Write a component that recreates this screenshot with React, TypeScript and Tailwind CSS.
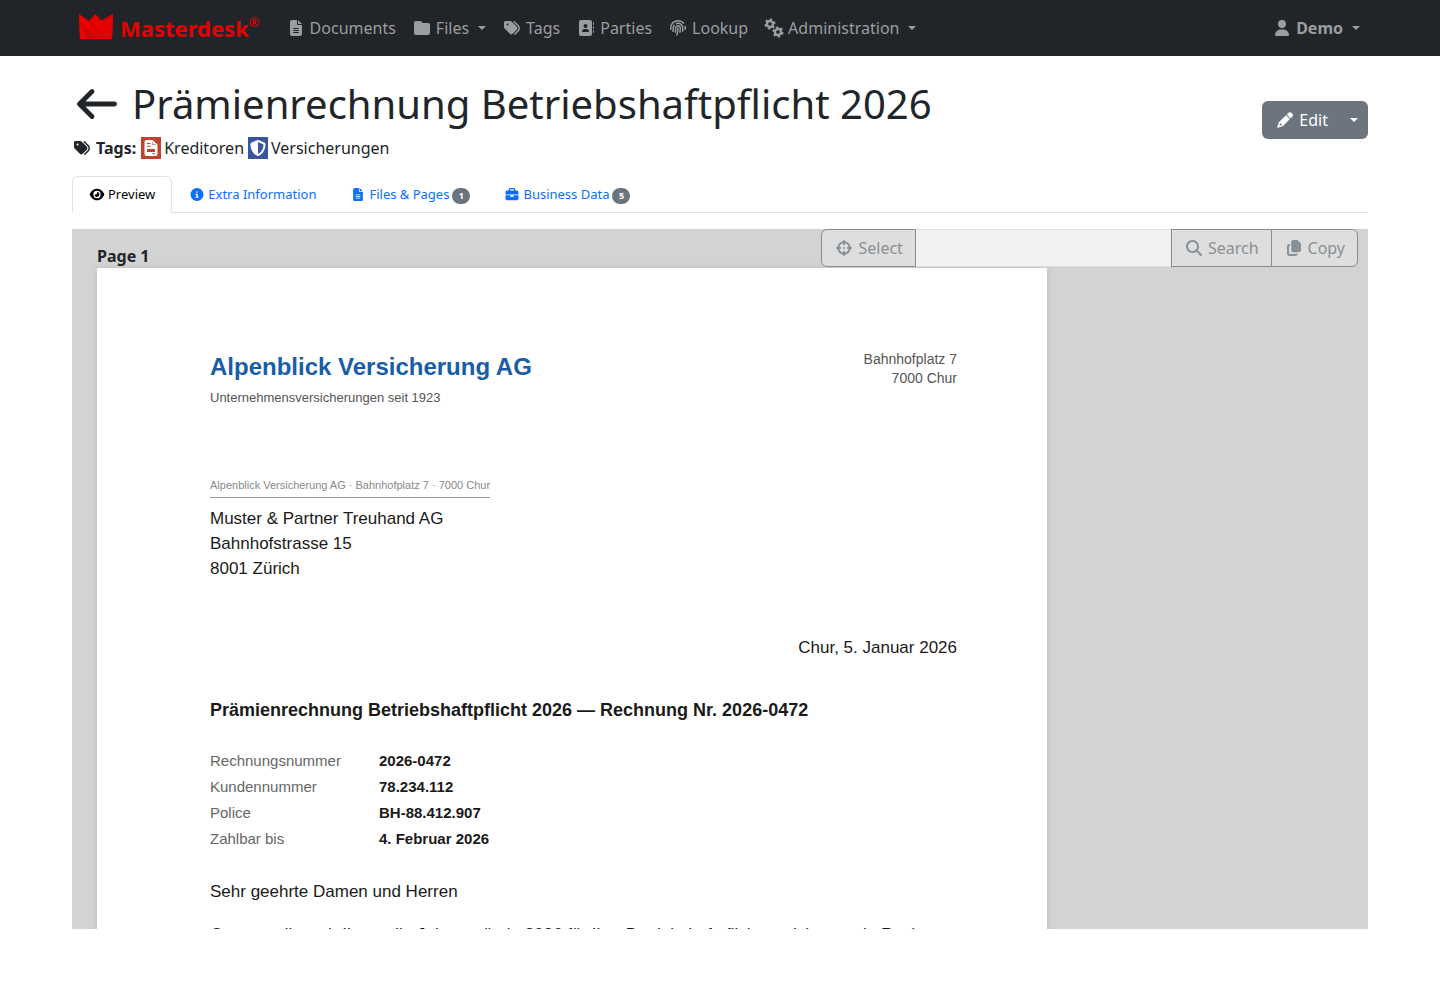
import { FC, ReactNode } from "react";
import {
  FaAddressBook,
  FaBriefcase,
  FaCircleInfo,
  FaCrosshairs,
  FaEye,
  FaFileLines,
  FaFingerprint,
  FaFolder,
  FaMagnifyingGlass,
  FaShieldHalved,
  FaTags,
  FaUser,
} from "react-icons/fa6";
import clsx from "clsx";

type Icon = FC<{ className?: string }>;

const ArrowIcon: Icon = ({ className }) => (
  <svg viewBox="0 0 512 512" className={className} aria-hidden="true">
    <path
      d="M480 256H32M192 96L32 256L192 416"
      fill="none"
      stroke="currentColor"
      strokeWidth="62"
      strokeLinecap="round"
      strokeLinejoin="round"
    />
  </svg>
);

const GEAR_TEETH = [0, 60, 120, 180, 240, 300];

const GearsIcon: Icon = ({ className }) => (
  <svg viewBox="0 0 20 20" className={className} fill="none" stroke="currentColor" aria-hidden="true">
    <g transform="translate(6 6) rotate(12)">
      <circle r="3" strokeWidth="2.400" />
      {GEAR_TEETH.map((angle) => (
        <path key={angle} d="M0 -3.500V-5.500" strokeWidth="2.600" transform={`rotate(${angle})`} />
      ))}
    </g>
    <g transform="translate(14 14) rotate(-12)">
      <circle r="3" strokeWidth="2.400" />
      {GEAR_TEETH.map((angle) => (
        <path key={angle} d="M0 -3.500V-5.500" strokeWidth="2.600" transform={`rotate(${angle})`} />
      ))}
    </g>
  </svg>
);

const PencilIcon: Icon = ({ className }) => (
  <svg viewBox="0 0 16 16" className={className} fill="currentColor" aria-hidden="true">
    <path d="M11.300 0.900a2.300 2.300 0 0 1 3.200 0l0.700 0.700a2.300 2.300 0 0 1 0 3.200l-1.600 1.600-3.900-3.900z" />
    <path
      fillRule="evenodd"
      d="M9 3.200l3.900 3.900-6.600 6.600a2 2 0 0 1-0.900 0.500L0.900 15.800a0.600 0.600 0 0 1-0.700-0.700l1.600-4.500a2 2 0 0 1 0.500-0.900zM3.200 11.400l-0.900 2.400 2.400-0.900v-1.200h-1.200z"
    />
  </svg>
);

const CopyIcon: Icon = ({ className }) => (
  <svg viewBox="0 0 16 16" className={className} aria-hidden="true">
    <path
      d="M7 0H11.500L15 3.500V10.500A2 2 0 0 1 13 12.300H7A2 2 0 0 1 5.200 10.500V2A2 2 0 0 1 7 0Z"
      fill="currentColor"
    />
    <path
      d="M4 5H3.300A1.500 1.500 0 0 0 2 6.500V13.500A1.500 1.500 0 0 0 3.500 15H9.300A1.500 1.500 0 0 0 10.800 13.700"
      fill="none"
      stroke="currentColor"
      strokeWidth="2"
    />
  </svg>
);

const InvoiceIcon: Icon = ({ className }) => (
  <svg viewBox="0 0 16 16" className={className} aria-hidden="true">
    <path
      fillRule="evenodd"
      fill="currentColor"
      d="M3.500 0H9.500L14.500 4.500V14A2 2 0 0 1 12.500 16H3.500A2 2 0 0 1 1.500 14V2A2 2 0 0 1 3.500 0ZM4 3V4H7.500V3ZM4 5.700V6.700H7.500V5.700ZM4 9V12H12V9ZM9.300 13.300V14.200H12V13.300ZM9 1.500V5H13V4.500H9.500V1.500Z"
    />
  </svg>
);

const Caret: FC<{ className?: string }> = ({ className }) => (
  <span
    className={clsx(
      "inline-block border-x-4 border-t-4 border-x-transparent border-t-current",
      className
    )}
  />
);

type NavItemProps = {
  icon: Icon;
  iconClass?: string;
  label: string;
  dropdown?: boolean;
  bold?: boolean;
};

const NavItem: FC<NavItemProps> = ({
  icon: Icon,
  iconClass = "h-4 w-5",
  label,
  dropdown,
  bold,
}) => (
  <li>
    <a
      href="#"
      className={clsx(
        "flex items-center gap-1 p-2 leading-6 text-[#9b9d9e] hover:text-white",
        bold && "font-bold"
      )}
    >
      <Icon className={clsx("shrink-0", iconClass)} />
      <span>{label}</span>
      {dropdown && <Caret className="ml-[5px]" />}
    </a>
  </li>
);

const Logo: FC = () => (
  <a href="#" className="flex items-center gap-1.5 text-[#e60000]">
    <svg viewBox="0 0 36 28" className="h-7 w-9" aria-hidden="true">
      <path d="M1 0L11 7L17.500 0L24 7L35 0L34 25H2Z" fill="#dd0000" />
      <path d="M1 0L24 25H2Z" fill="#f20000" />
      <path d="M3 10L22 25H8Z" fill="#d40000" />
      <path d="M35 0L14 12L28 25H34Z" fill="#dc0000" />
      <path d="M17.500 0L12 7L29 25Z" fill="#ea0000" />
      <path d="M35 0L23 11L32 25H34Z" fill="#e60000" />
      <path d="M2 9L24 25M12 7L29 25M24 7L34 21" stroke="#b80000" strokeWidth="0.500" />
    </svg>
    <span className="text-[22px] leading-6 font-bold">Masterdesk</span>
    <span className="-ml-1.5 self-start text-[13px] leading-4">®</span>
  </a>
);

const Navbar: FC = () => (
  <nav className="bg-[#212529]">
    <div className="mx-auto flex h-14 max-w-[1320px] items-center px-3">
      <div className="mr-[18px] pl-1.5">
        <Logo />
      </div>
      <ul className="flex grow items-center">
        <NavItem icon={FaFileLines} label="Documents" />
        <NavItem icon={FaFolder} label="Files" dropdown />
        <NavItem icon={FaTags} label="Tags" />
        <NavItem icon={FaAddressBook} label="Parties" />
        <NavItem icon={FaFingerprint} label="Lookup" />
        <NavItem icon={GearsIcon} iconClass="size-5" label="Administration" dropdown />
      </ul>
      <ul className="flex items-center">
        <NavItem icon={FaUser} label="Demo" dropdown bold />
      </ul>
    </div>
  </nav>
);

type TagProps = {
  icon: Icon;
  label: string;
  color: string;
};

const Tag: FC<TagProps> = ({ icon: Icon, label, color }) => (
  <a href="#" className="flex items-center gap-[3px]">
    <span className={clsx("flex h-[22px] w-5 items-center justify-center text-white", color)}>
      <Icon className="size-4" />
    </span>
    {label}
  </a>
);

const PageHeader: FC = () => (
  <header className="flex items-center justify-between pt-6 pb-4">
    <div>
      <h1 className="mb-2 flex items-center gap-[10px] text-[40px] leading-[48px]">
        <a href="#" aria-label="Back">
          <ArrowIcon className="h-10 w-[50px]" />
        </a>
        Prämienrechnung Betriebshaftpflicht 2026
      </h1>
      <div className="flex items-center gap-1 leading-6">
        <FaTags className="h-4 w-5" />
        <strong className="pr-px">Tags:</strong>
        <Tag icon={InvoiceIcon} label="Kreditoren" color="bg-[#c1432b]" />
        <Tag icon={FaShieldHalved} label="Versicherungen" color="bg-[#3b54a0]" />
      </div>
    </div>
    <div className="flex h-[38px] overflow-hidden rounded-md bg-[#6c757d] text-white">
      <button className="flex items-center gap-1 pr-3 pl-[13px] hover:bg-[#5c636a]">
        <PencilIcon className="h-4 w-5" />
        Edit
      </button>
      <button aria-label="More actions" className="flex items-center px-[10px] hover:bg-[#5c636a]">
        <Caret />
      </button>
    </div>
  </header>
);

type TabProps = {
  icon: Icon;
  label: string;
  active?: boolean;
  count?: number;
};

const Tab: FC<TabProps> = ({ icon: Icon, label, active, count }) => (
  <button
    role="tab"
    aria-selected={!!active}
    className={clsx(
      "-mb-px flex h-[37px] items-center gap-[3px] rounded-t-md border px-4 text-[13px]",
      active
        ? "border-[#dee2e6] border-b-white bg-white text-black"
        : "border-transparent text-[#0d6efd]"
    )}
  >
    <Icon className="h-[13px] w-4" />
    {label}
    {count !== undefined && (
      <span className="mt-0.5 flex h-4 w-[18px] items-center justify-center rounded-full bg-[#6c757d] text-[9px] font-bold text-white">
        {count}
      </span>
    )}
  </button>
);

const ToolButton: FC<{ icon: Icon; label: string; className?: string }> = ({
  icon: Icon,
  label,
  className,
}) => (
  <button
    disabled
    className={clsx(
      "flex items-center gap-1 border border-[#858c93] bg-[#dedede] px-3 text-[#899096]",
      className
    )}
  >
    <Icon className="h-4 w-5" />
    {label}
  </button>
);

const Toolbar: FC = () => (
  <div className="flex h-[38px]">
    <ToolButton icon={FaCrosshairs} label="Select" className="rounded-l-md" />
    <input
      type="text"
      disabled
      aria-label="Search text"
      className="w-[255px] border-y border-[#dcdddf] bg-[#f1f1f1] px-3"
    />
    <ToolButton icon={FaMagnifyingGlass} label="Search" />
    <ToolButton icon={CopyIcon} label="Copy" className="-ml-px rounded-r-md" />
  </div>
);

const details = [
  ["Rechnungsnummer", "2026-0472"],
  ["Kundennummer", "78.234.112"],
  ["Police", "BH-88.412.907"],
  ["Zahlbar bis", "4. Februar 2026"],
];

const Paragraph: FC<{ children: ReactNode; className?: string }> = ({ children, className }) => (
  <p className={clsx("text-[17px] leading-[25px]", className)}>{children}</p>
);

const Letter: FC = () => (
  <article className="ml-[25px] w-[950px] bg-white pt-[82px] pr-[90px] pb-24 pl-[113px] font-['Liberation_Sans',Arial,sans-serif] text-[#1a1a1a] shadow-[0_0_6px_rgba(0,0,0,0.1)]">
    <div className="flex justify-between">
      <div>
        <h2 className="text-2xl leading-[34px] font-bold text-[#1a5da6]">
          Alpenblick Versicherung AG
        </h2>
        <p className="mt-1 text-[13px] leading-5 text-[#555555]">
          Unternehmensversicherungen seit 1923
        </p>
      </div>
      <address className="text-right text-[14px] leading-[19px] text-[#555555] not-italic">
        Bahnhofplatz 7
        <br />
        7000 Chur
      </address>
    </div>

    {/* Address window */}
    <div className="mt-16">
      <span className="inline-block border-b border-[#999999] pb-1 text-[11px] leading-4 text-[#888888]">
        Alpenblick Versicherung AG · Bahnhofplatz 7 · 7000 Chur
      </span>
    </div>
    <Paragraph className="mt-2">
      Muster &amp; Partner Treuhand AG
      <br />
      Bahnhofstrasse 15
      <br />
      8001 Zürich
    </Paragraph>

    <Paragraph className="mt-[54px] text-right">Chur, 5. Januar 2026</Paragraph>

    <h3 className="mt-9 text-lg leading-7 font-bold">
      Prämienrechnung Betriebshaftpflicht 2026 — Rechnung Nr. 2026-0472
    </h3>

    <table className="mt-6 text-[15px] leading-[26px]">
      <tbody>
        {details.map(([label, value]) => (
          <tr key={label}>
            <th scope="row" className="w-[169px] text-left font-normal text-[#666666]">
              {label}
            </th>
            <td className="font-bold">{value}</td>
          </tr>
        ))}
      </tbody>
    </table>

    <Paragraph className="mt-[27px]">Sehr geehrte Damen und Herren</Paragraph>
    <Paragraph className="mt-[18px] whitespace-nowrap">
      Gerne stellen wir Ihnen die Jahresprämie 2026 für Ihre Betriebshaftpflichtversicherung in
      Rechnung.
    </Paragraph>
  </article>
);

export default function App() {
  return (
    <div className="min-h-screen bg-white font-['Noto_Sans',sans-serif] text-base text-[#212529]">
      <Navbar />
      <main className="mx-auto max-w-[1320px] px-3">
        <PageHeader />
        <div role="tablist" className="flex border-b border-[#dee2e6]">
          <Tab icon={FaEye} label="Preview" active />
          <Tab icon={FaCircleInfo} label="Extra Information" />
          <Tab icon={FaFileLines} label="Files & Pages" count={1} />
          <Tab icon={FaBriefcase} label="Business Data" count={5} />
        </div>
        <section className="mt-4 h-[70vh] overflow-hidden bg-[#d3d3d3]">
          <div className="flex h-[39px] items-start justify-between pr-[10px] pl-[25px]">
            <strong className="self-end leading-6">Page 1</strong>
            <Toolbar />
          </div>
          <Letter />
        </section>
      </main>
    </div>
  );
}
